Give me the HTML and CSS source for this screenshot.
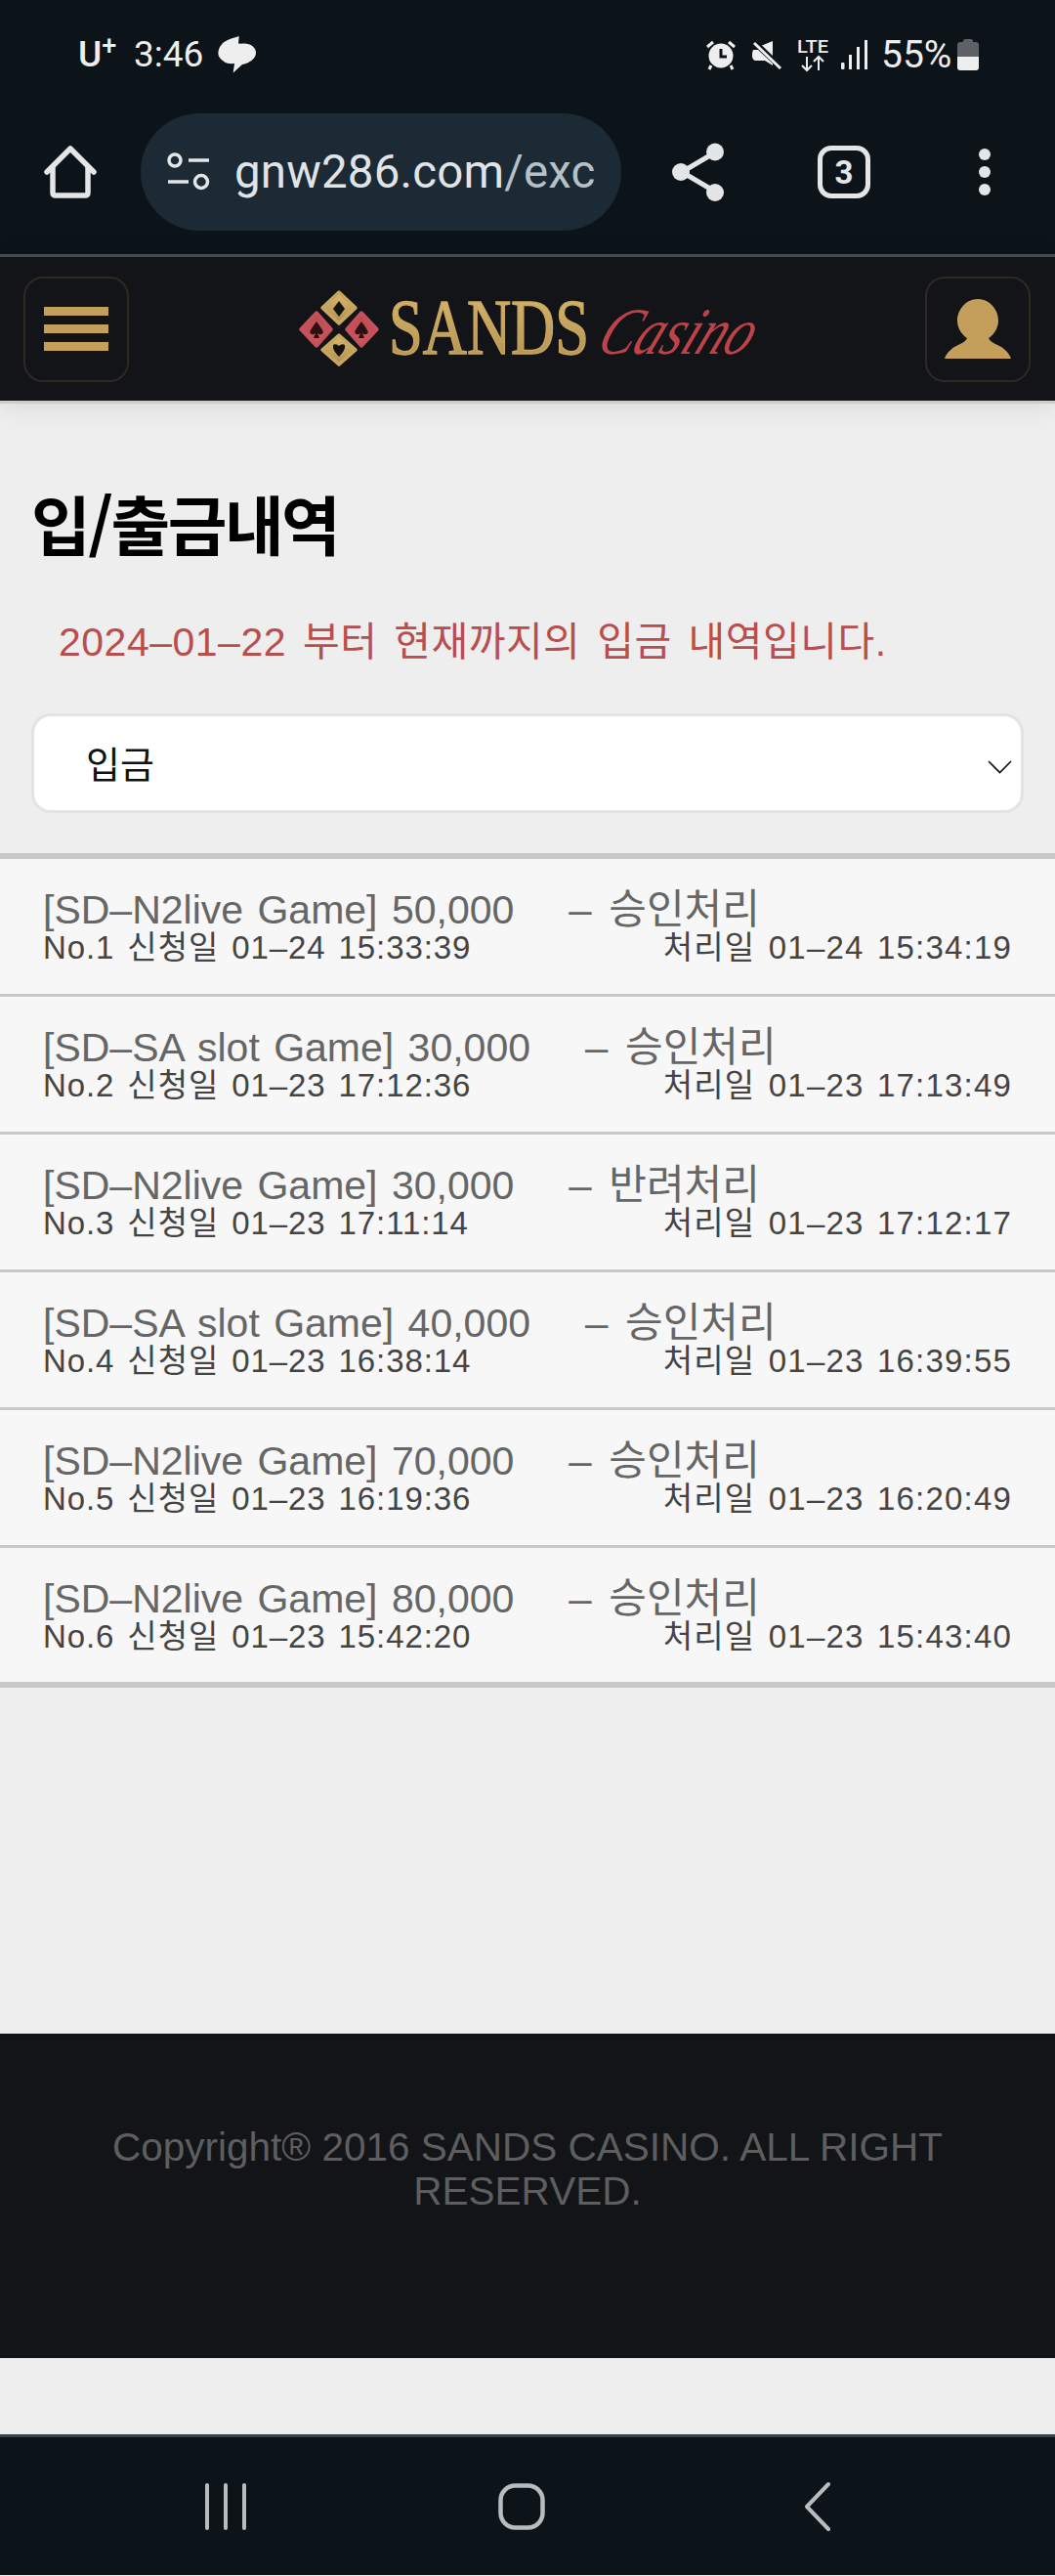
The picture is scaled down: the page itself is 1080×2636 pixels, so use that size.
FILE: index.html
```html
<!DOCTYPE html>
<html lang="ko">
<head>
<meta charset="utf-8">
<title>입/출금내역</title>
<link rel="stylesheet" href="styles.css">
</head>
<body>
<div class="chrome">
  <div class="status">
    <div class="status-left">
      <span class="carrier">U<sup>+</sup></span>
      <span class="clock">3:46</span>
      <svg class="cloud" viewBox="0 0 40 38"><path d="M21.700 0 L21 7.600 C24 8 26 7.500 28 7.600 C34 8 39 12 39 17 C39 22 34 27 25 29 L15.700 37.500 L17 28 C12 28.500 8 28 5 25 C1 22 0 19 0.500 16 C1 11 5 6 10 4 C14 2 18 1.500 21.700 0Z"/></svg>
    </div>
    <div class="status-right">
      <svg class="ic-alarm" viewBox="0 0 30 30"><circle cx="15" cy="16" r="12.500" fill="#eee"/><path d="M15 9v8h6" fill="none" stroke="#0c1319" stroke-width="3"/><path d="M1 7l6-5M29 7l-6-5M5 26l-2 4M25 26l2 4" stroke="#eee" stroke-width="3" fill="none"/></svg>
      <svg class="ic-mute" viewBox="0 0 30 30"><path d="M21 1v15L10 5.500zM1 10h5l15 14v2l-8-5H3q-3-1-3-5 0-4 1-6z" fill="#eee"/><path d="M2 3l27 26" stroke="#eee" stroke-width="3"/></svg>
      <svg class="ic-lte" viewBox="0 0 32 34"><text x="0" y="15" class="lte-text" textLength="32" lengthAdjust="spacingAndGlyphs">LTE</text><path d="M10 19v14M5 28l5 5 5-5M22 33V19M17 24l5-5 5 5" fill="none" stroke="#eee" stroke-width="2"/></svg>
      <svg class="ic-signal" viewBox="0 0 27 30"><rect x="0" y="23" width="3.500" height="7" rx="1"/><rect x="8" y="15" width="3" height="15"/><rect x="16" y="7" width="3" height="23"/><rect x="24" y="0" width="3" height="30"/></svg>
      <span class="battery-pct">55%</span>
      <div class="battery"><div class="battery-cap"></div><div class="battery-empty"></div><div class="battery-full"></div></div>
    </div>
  </div>
  <div class="browser">
    <svg class="ic-home" viewBox="0 0 54 54"><path d="M3 27 L27 3 L51 27" fill="none" stroke="#e3e5e7" stroke-width="5.500" stroke-linecap="round" stroke-linejoin="round"/><path d="M9 22 V48 Q9 51 12 51 H42 Q45 51 45 48 V22" fill="none" stroke="#e3e5e7" stroke-width="5.500"/></svg>
    <div class="urlbar">
      <svg class="ic-tune" viewBox="0 0 44 38"><circle cx="8" cy="7" r="6" fill="none" stroke="#e3e5e7" stroke-width="3.500"/><path d="M22 7h21M1 29h21" stroke="#e3e5e7" stroke-width="3.500"/><circle cx="35" cy="29" r="6.500" fill="none" stroke="#e3e5e7" stroke-width="3.500"/></svg>
      <span class="url">gnw286.com<span class="url-path">/exc</span></span>
    </div>
    <svg class="ic-share" viewBox="0 0 54 60"><path d="M44 10 L10 30 L44 50" fill="none" stroke="#e3e5e7" stroke-width="5"/><circle cx="44" cy="9.500" r="9" fill="#e3e5e7"/><circle cx="9" cy="30" r="9" fill="#e3e5e7"/><circle cx="44" cy="51" r="9" fill="#e3e5e7"/></svg>
    <div class="tabs">3</div>
    <div class="dots"><i></i><i></i><i></i></div>
  </div>
</div>

<header class="site-header">
  <button class="hbtn"><span class="bars"><i></i><i></i><i></i></span></button>
  <svg class="logo" viewBox="0 0 470 82">
    <defs>
      <linearGradient id="gold" x1="0" y1="0" x2="0" y2="1"><stop offset="0" stop-color="#d9b86e"/><stop offset="1" stop-color="#b08f4e"/></linearGradient>
      <linearGradient id="red" x1="0" y1="0" x2="0" y2="1"><stop offset="0" stop-color="#bd4a50"/><stop offset="1" stop-color="#c95a60"/></linearGradient>
    </defs>
    <g stroke-linejoin="round" stroke-width="3.500">
      <path d="M42 3 L59 19 L42 35 L25 19Z" fill="url(#gold)" stroke="#c8a660"/>
      <path d="M42 47 L59 62 L42 77 L25 62Z" fill="url(#gold)" stroke="#c8a660"/>
      <path d="M19 24 L34 41 L19 58 L3 41Z" fill="url(#red)" stroke="#c5525a"/>
      <path d="M65 24 L81 41 L65 58 L50 41Z" fill="url(#red)" stroke="#c5525a"/>
      <path d="M42 12 L48 20 L42 28 L36 20Z" fill="#15130f" stroke="none"/>
      <path d="M36 57 Q39 55 42 58 Q45 55 48 57 Q49 62 42 69 Q35 62 36 57Z" fill="#15130f" stroke="none"/>
      <path d="M19 33 Q25 41 26 44 Q24 48 20 45 L22 50 H16 L18 45 Q14 48 12 44 Q13 41 19 33Z" fill="#2a1012" stroke="none"/>
      <path d="M65 33 Q71 41 72 44 Q70 48 66 45 L68 50 H62 L64 45 Q60 48 58 44 Q59 41 65 33Z" fill="#2a1012" stroke="none"/>
    </g>
    <text x="93" y="66" class="logo-sands" textLength="205" lengthAdjust="spacingAndGlyphs">SANDS</text>
    <text x="0" y="0" class="logo-casino" textLength="156" lengthAdjust="spacingAndGlyphs" transform="translate(303 66) skewX(-24)">Casino</text>
  </svg>
  <button class="hbtn">
    <svg class="ic-user" viewBox="0 0 68 61"><path d="M34 0 C47 0 55 12 55 22 C55 30 50 37 45 40 C46 43 50 45 54 47 C61 50 66 55 68 61 H0 C2 55 7 50 14 47 C18 45 22 43 23 40 C18 37 13 30 13 22 C13 12 21 0 34 0Z" fill="#c49f5c"/></svg>
  </button>
</header>

<main class="content">
  <h1 class="page-title">입/출금내역</h1>
  <p class="notice">2024–01–22 부터 현재까지의 입금 내역입니다.</p>
  <div class="select">
    <span class="select-value">입금</span>
    <svg class="chev" viewBox="0 0 25 13"><path d="M1 1 L12.500 12.500 L24 1" fill="none" stroke="#111" stroke-width="1.600"/></svg>
  </div>
</main>

<ul class="list">
  <li class="row"><div class="row-title">[SD–N2live Game] 50,000<span class="state">– 승인처리</span></div><div class="row-sub"><span>No.1 신청일 01–24 15:33:39</span><span>처리일 01–24 15:34:19</span></div></li>
  <li class="row"><div class="row-title">[SD–SA slot Game] 30,000<span class="state">– 승인처리</span></div><div class="row-sub"><span>No.2 신청일 01–23 17:12:36</span><span>처리일 01–23 17:13:49</span></div></li>
  <li class="row"><div class="row-title">[SD–N2live Game] 30,000<span class="state">– 반려처리</span></div><div class="row-sub"><span>No.3 신청일 01–23 17:11:14</span><span>처리일 01–23 17:12:17</span></div></li>
  <li class="row"><div class="row-title">[SD–SA slot Game] 40,000<span class="state">– 승인처리</span></div><div class="row-sub"><span>No.4 신청일 01–23 16:38:14</span><span>처리일 01–23 16:39:55</span></div></li>
  <li class="row"><div class="row-title">[SD–N2live Game] 70,000<span class="state">– 승인처리</span></div><div class="row-sub"><span>No.5 신청일 01–23 16:19:36</span><span>처리일 01–23 16:20:49</span></div></li>
  <li class="row"><div class="row-title">[SD–N2live Game] 80,000<span class="state">– 승인처리</span></div><div class="row-sub"><span>No.6 신청일 01–23 15:42:20</span><span>처리일 01–23 15:43:40</span></div></li>
</ul>

<footer class="site-footer">
  <p class="copy">Copyright® 2016 SANDS CASINO. ALL RIGHT RESERVED.</p>
</footer>

<nav class="navbar">
  <svg class="nav-recent" viewBox="0 0 44 48"><path d="M3 2v44M22 2v44M41 2v44" stroke="#b9bcbe" stroke-width="4" stroke-linecap="round"/></svg>
  <svg class="nav-home" viewBox="0 0 48 48"><rect x="2.500" y="2.500" width="43" height="43" rx="15" fill="none" stroke="#b9bcbe" stroke-width="4.500"/></svg>
  <svg class="nav-back" viewBox="0 0 28 50"><path d="M25 2 L3 25 L25 48" fill="none" stroke="#b9bcbe" stroke-width="4" stroke-linecap="round" stroke-linejoin="round"/></svg>
</nav>
</body>
</html>
```
FILE: styles.css
```css
* { box-sizing: border-box; }
html, body { margin: 0; padding: 0; }
body {
  width: 1080px;
  height: 2636px;
  overflow: hidden;
  background: #eeeeee;
  font-family: "Liberation Sans", "Noto Sans CJK KR", sans-serif;
}
svg { display: block; flex: none; overflow: visible; }

.chrome { height: 260px; background: #0c1319; }
.status {
  height: 116px;
  display: flex;
  justify-content: space-between;
  align-items: center;
  padding: 0 78px 4px 80px;
  color: #eeeeee;
  font-family: Roboto, sans-serif;
}
.status-left, .status-right { display: flex; align-items: center; }
.carrier { font-size: 37px; font-weight: 500; line-height: 40px; width: 57px; }
.carrier sup { font-size: 27px; line-height: 0; vertical-align: 12px; }
.clock { font-size: 37px; line-height: 40px; width: 86px; }
.cloud { width: 40px; height: 38px; fill: #eeeeee; }
.ic-alarm { width: 30px; height: 30px; margin-right: 17px; }
.ic-mute { width: 30px; height: 30px; margin-right: 16px; }
.ic-lte { width: 32px; height: 34px; margin-right: 13px; }
.lte-text { font-family: Roboto, sans-serif; font-size: 19px; font-weight: 500; fill: #eeeeee; }
.ic-signal { width: 27px; height: 30px; margin-right: 14px; fill: #eeeeee; }
.battery-pct { font-size: 39px; line-height: 40px; width: 78px; }
.battery { width: 22px; height: 32px; display: flex; flex-direction: column; align-items: center; }
.battery-cap { width: 10px; height: 3px; background: #5e6165; border-radius: 2px 2px 0 0; }
.battery-empty { width: 22px; height: 15px; background: #5e6165; border-radius: 3px 3px 0 0; }
.battery-full { width: 22px; height: 14px; background: #eeeeee; border-radius: 0 0 3px 3px; }

.browser { height: 120px; display: flex; align-items: center; padding-left: 45px; }
.ic-home { width: 54px; height: 54px; margin-right: 45px; }
.urlbar {
  width: 492px;
  height: 120px;
  border-radius: 60px;
  background: #1b2a34;
  display: flex;
  align-items: center;
  padding-left: 27px;
  margin-right: 52px;
  overflow: hidden;
}
.ic-tune { width: 44px; height: 38px; margin-right: 25px; }
.url { font-family: Roboto, sans-serif; font-size: 47.400px; color: #e1e4e7; white-space: nowrap; letter-spacing: .2px; }
.url-path { color: #b7c0c6; }
.ic-share { width: 54px; height: 60px; margin-right: 95px; }
.tabs {
  width: 54px;
  height: 54px;
  border: 5px solid #e3e5e7;
  border-radius: 14px;
  color: #e3e5e7;
  font-family: "Roboto", sans-serif;
  font-weight: 700;
  font-size: 33px;
  display: flex;
  align-items: center;
  justify-content: center;
  margin-right: 111px;
}
.dots { display: flex; flex-direction: column; gap: 6px; }
.dots i { display: block; width: 12px; height: 12px; border-radius: 50%; background: #e3e5e7; }

.site-header {
  height: 150px;
  border-top: 3px solid #434b55;
  background: #121418;
  box-shadow: 0 3px 0 #cdcdcd, 0 4px 26px rgba(0,0,0,.1);
  display: flex;
  align-items: center;
  justify-content: space-between;
  padding: 0 25px 0 24px;
  position: relative;
}
.hbtn {
  width: 108px;
  height: 108px;
  padding: 0;
  background: #121418;
  border: 2px solid #2d2a22;
  border-radius: 20px;
  display: flex;
  align-items: center;
  justify-content: center;
}
.bars { display: flex; flex-direction: column; gap: 9px; }
.bars i { display: block; width: 66px; height: 9px; background: #c49f5c; }
.ic-user { width: 68px; height: 61px; }
.logo { width: 470px; height: 82px; }
.logo-sands { font-family: "Liberation Serif", serif; font-size: 80px; fill: url(#gold); stroke: #c8a660; stroke-width: 1.500px; }
.logo-casino { font-family: "Liberation Serif", serif; font-style: italic; font-size: 68px; fill: #bc4347; }

.content { padding: 84px 32px 0; }
.page-title {
  margin: 0;
  font-family: "Noto Sans CJK KR", sans-serif;
  font-size: 66px;
  line-height: 80px;
  font-weight: 700;
  letter-spacing: -2.500px;
  color: #000000;
}
.notice {
  margin: 52px 0 0;
  padding-left: 28px;
  font-size: 41px;
  line-height: 62px;
  word-spacing: 5px;
  letter-spacing: .5px;
  color: #b84e4e;
}
.select {
  margin-top: 42px;
  height: 102px;
  background: #ffffff;
  border: 3px solid #e3e3e3;
  border-radius: 20px;
  display: flex;
  align-items: center;
  justify-content: space-between;
  padding: 0 9px 0 53px;
  font-size: 38px;
  color: #111111;
}
.select-value { margin-top: -4px; }
.chev { width: 25px; height: 13px; margin-top: 6px; }

.list {
  list-style: none;
  margin: 41px 0 354px;
  padding: 0;
  border-top: 6px solid #c8c8c8;
}
.row {
  height: 141px;
  background: #f7f7f7;
  border-bottom: 3px solid #c8c8c8;
  padding: 27px 44px 0 44px;
}
.row:last-child { height: 143px; border-bottom-width: 6px; }
.row-title { font-size: 41px; line-height: 50px; word-spacing: 3px; color: #666666; white-space: nowrap; }
.state { margin-left: 56px; font-size: 42px; word-spacing: 6px; }
.row-sub {
  display: flex;
  justify-content: space-between;
  margin-top: -6px;
  font-size: 33px;
  line-height: 40px;
  letter-spacing: .9px;
  word-spacing: 3px;
  color: #444444;
  white-space: nowrap;
}
.row-sub span:last-child { letter-spacing: 1.200px; }

.site-footer {
  height: 332px;
  background: #121418;
  display: flex;
  justify-content: center;
  padding: 94px 100px 0;
}
.copy {
  margin: 0;
  font-size: 40.500px;
  line-height: 45px;
  color: #5e5e5e;
  text-align: center;
}

.navbar {
  margin-top: 78px;
  height: 144px;
  border-top: 3px solid #3a424a;
  background: #0c1319;
  display: flex;
  align-items: center;
  padding: 0 0 0 209px;
}
.nav-recent { width: 44px; height: 48px; margin-right: 257px; }
.nav-home { width: 48px; height: 48px; margin-right: 265px; }
.nav-back { width: 28px; height: 50px; }
```
